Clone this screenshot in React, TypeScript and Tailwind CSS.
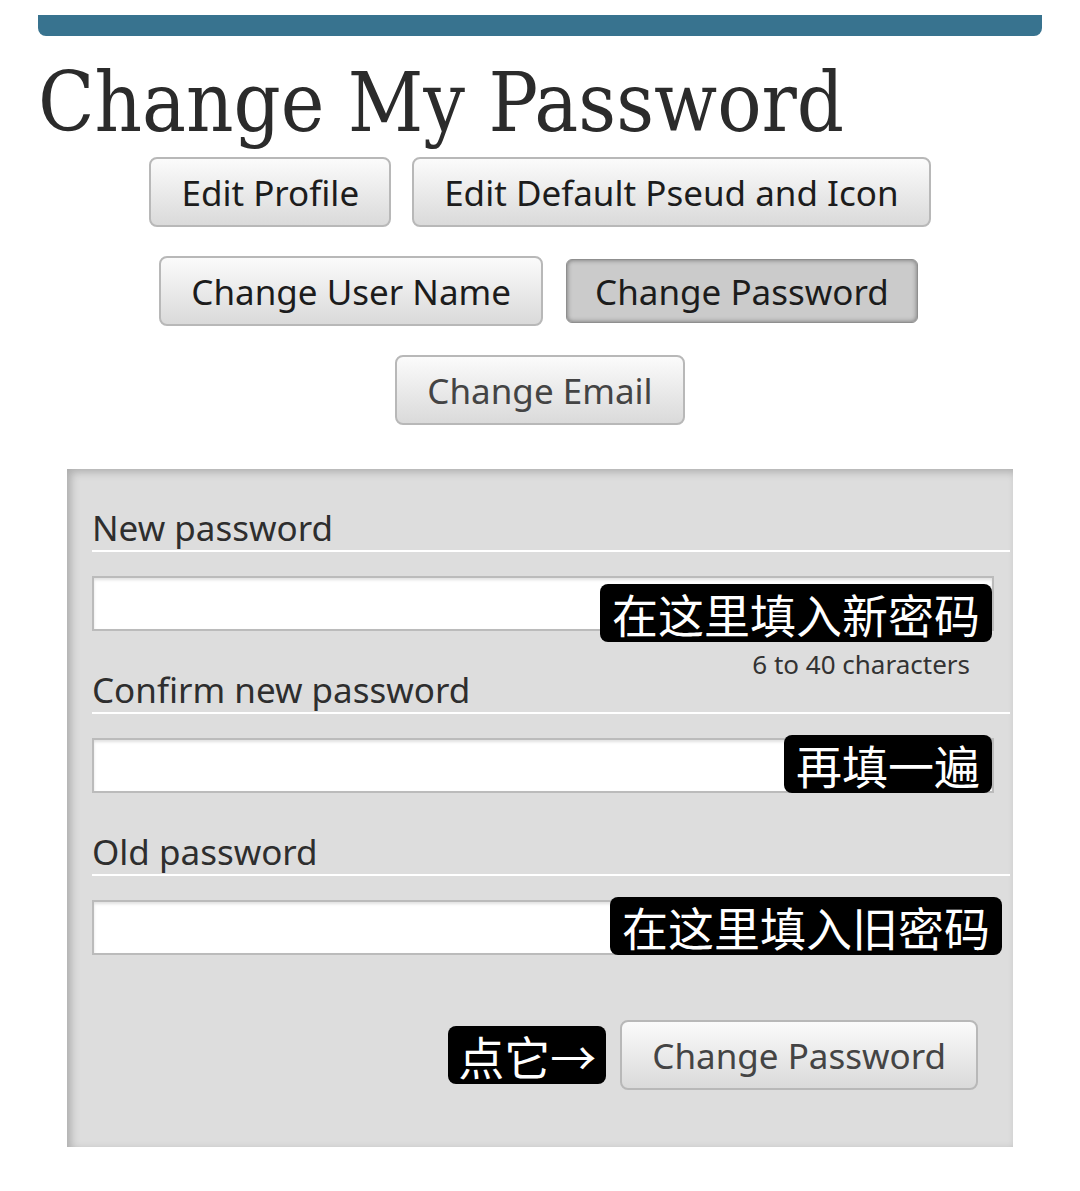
const sans = "font-['Noto_Sans','Noto_Sans_CJK_SC',sans-serif]";

function NavButton({ label, muted = false }: { label: string; muted?: boolean }) {
  return (
    <button
      className={`h-[70px] rounded-[8px] border-2 border-[#b8b8b8] bg-gradient-to-b from-[#fbfbfb] to-[#dadada] px-[30px] text-[35px] leading-none ${
        muted ? "text-[#444]" : "text-[#1c1c1c]"
      }`}
    >
      {label}
    </button>
  );
}

function ActiveButton({ label }: { label: string }) {
  return (
    <div className="flex h-[70px] items-center px-[3px]">
      <div className="flex h-[64px] items-center rounded-[6px] border border-[#8f8f8f] bg-[#cbcbcb] px-[28px] text-[35px] leading-none text-[#1c1c1c] shadow-[inset_0_0_5px_rgba(0,0,0,0.45)]">
        {label}
      </div>
    </div>
  );
}

function Note({ text, className }: { text: string; className: string }) {
  return (
    <span
      className={`absolute flex h-[58px] items-center rounded-[8px] bg-black px-[12px] text-[46px] leading-none text-white font-['Noto_Sans_CJK_SC',sans-serif] ${className}`}
    >
      {text}
    </span>
  );
}

function Label({ text, className = "" }: { text: string; className?: string }) {
  return (
    <div className={`border-b-2 border-white text-[35px] leading-[45px] text-[#2e2e2e] ${className}`}>
      {text}
    </div>
  );
}

function PasswordInput({ children }: { children?: React.ReactNode }) {
  return (
    <div className="relative mt-[24px] mr-[16px]">
      <input
        type="password"
        className="block h-[55px] w-full border-2 border-[#bbbbbb] bg-white shadow-[inset_0_2px_3px_rgba(0,0,0,0.12)] outline-none"
      />
      {children}
    </div>
  );
}

export default function App() {
  return (
    <div className={`min-h-screen bg-white ${sans}`}>
      <div className="mx-auto w-[1004px]">
        <div className="mt-[15px] h-[21px] rounded-b-[8px] bg-[#38738f]" />

        <h1 className="mt-[26px] text-[82px] leading-[81px] text-[#2b2b2b] font-['DejaVu_Serif_Condensed','DejaVu_Serif',serif] [font-stretch:condensed]">
          Change My Password
        </h1>

        <div className="mt-[14px] flex flex-col gap-[29px]">
          <div className="flex justify-center gap-[21px]">
            <NavButton label="Edit Profile" />
            <NavButton label="Edit Default Pseud and Icon" />
          </div>
          <div className="flex justify-center gap-[20px]">
            <NavButton label="Change User Name" />
            <ActiveButton label="Change Password" />
          </div>
          <div className="flex justify-center">
            <NavButton label="Change Email" muted />
          </div>
        </div>

        <form className="mx-[29px] mt-[44px] bg-[#dddddd] pt-[36px] pb-[57px] pl-[25px] pr-[3px] shadow-[inset_4px_3px_9px_rgba(0,0,0,0.22)]">
          <Label text="New password" />
          <PasswordInput>
            <Note text="在这里填入新密码" className="right-[2px] top-[8px]" />
          </PasswordInput>
          <div className="mt-[18px] h-0 pr-[40px] text-right text-[26px] leading-[30px] text-[#333]">
            6 to 40 characters
          </div>

          <Label text="Confirm new password" className="mt-[18px]" />
          <PasswordInput>
            <Note text="再填一遍" className="right-[2px] top-[-3px]" />
          </PasswordInput>

          <Label text="Old password" className="mt-[36px]" />
          <PasswordInput>
            <Note text="在这里填入旧密码" className="right-[-8px] top-[-3px]" />
          </PasswordInput>

          <div className="mt-[65px] mr-[32px] flex items-center justify-end gap-[14px]">
            <span className="flex h-[58px] items-center rounded-[8px] bg-black px-[10px] text-[46px] leading-none text-white font-['Noto_Sans_CJK_SC',sans-serif]">
              点它→
            </span>
            <NavButton label="Change Password" muted />
          </div>
        </form>
      </div>
    </div>
  );
}
